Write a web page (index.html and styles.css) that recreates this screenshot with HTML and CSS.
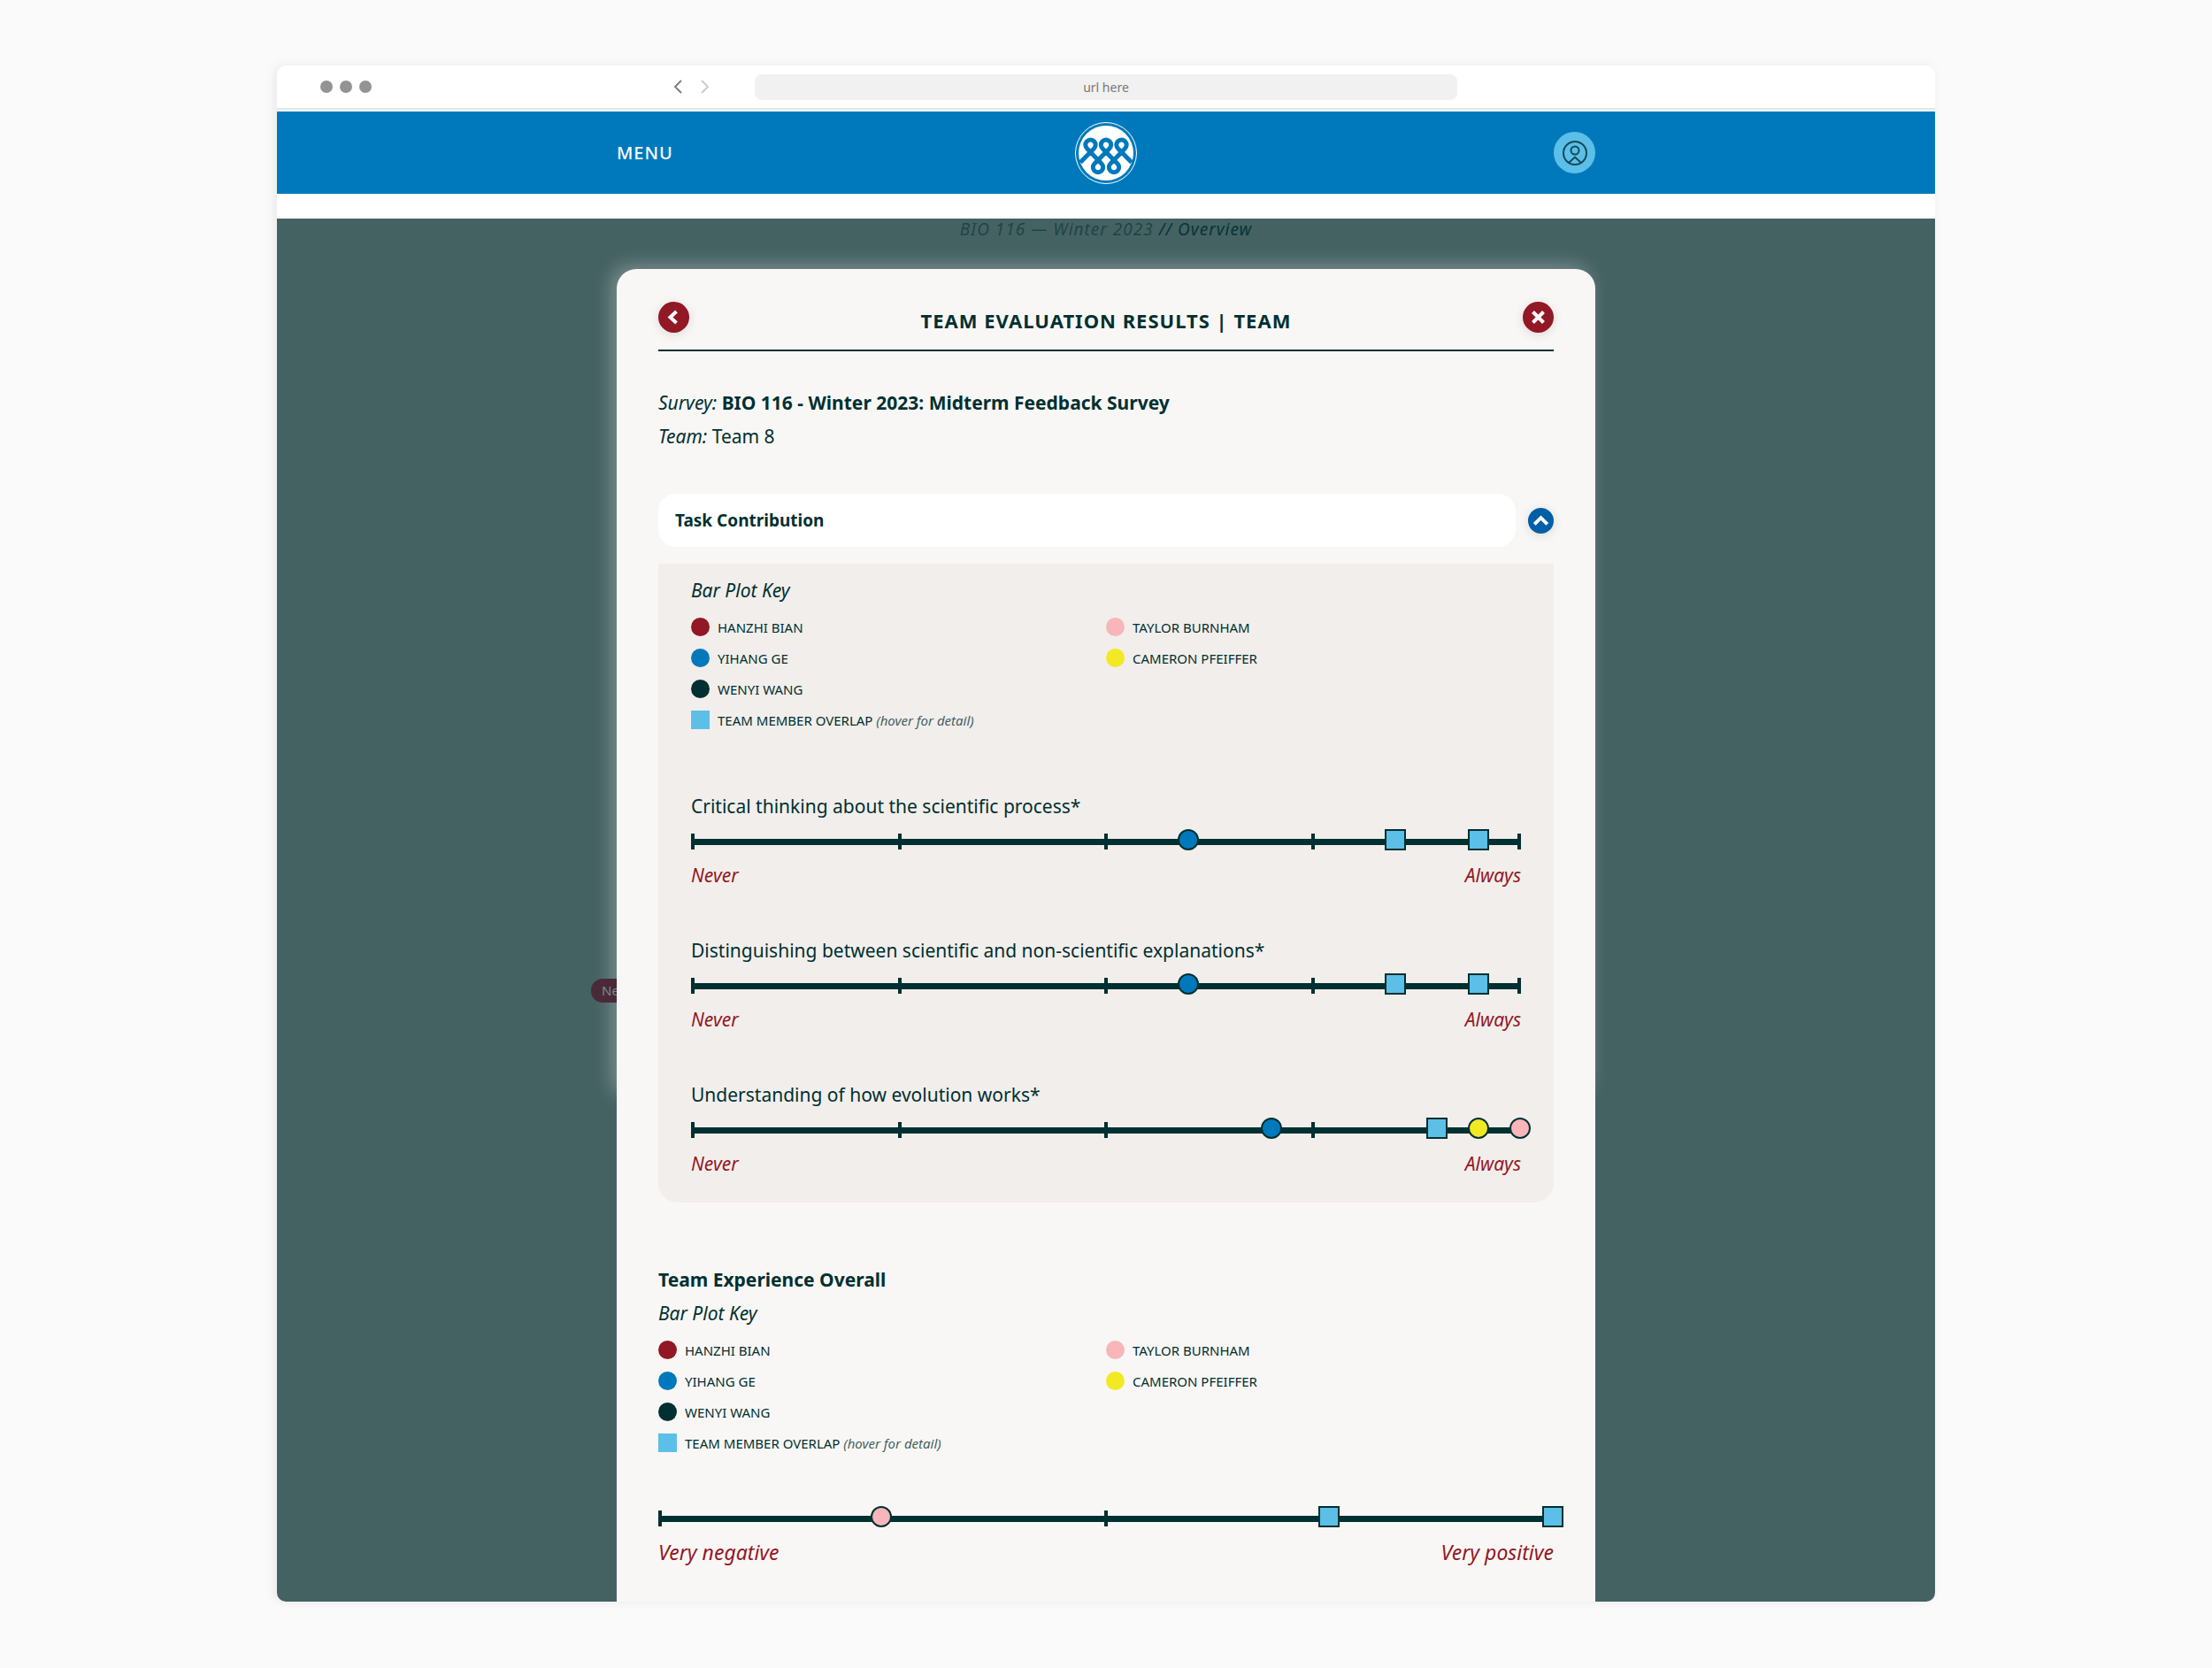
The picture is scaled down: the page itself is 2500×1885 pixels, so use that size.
FILE: index.html
```html
<!DOCTYPE html>
<html lang="en">
<head>
<meta charset="utf-8">
<meta name="viewport" content="width=device-width, initial-scale=1">
<title>Team Evaluation Results</title>
<link rel="stylesheet" href="styles.css">
</head>
<body>
<div class="browser">
  <div class="chrome">
    <div class="chrome-left">
      <div class="dots"><span class="dot"></span><span class="dot"></span><span class="dot"></span></div>
      <div class="arrows">
        <button class="arrow" type="button" aria-label="Back"><svg width="12" height="18" viewBox="0 0 12 18"><path d="M10 2 3 9l7 7"/></svg></button>
        <button class="arrow arrow-off" type="button" aria-label="Forward"><svg width="12" height="18" viewBox="0 0 12 18"><path d="m2 2 7 7-7 7"/></svg></button>
      </div>
    </div>
    <input class="url" type="text" value="url here" aria-label="Address">
  </div>

  <header class="site-header">
    <div class="site-bar">
      <div class="bar-side"><button class="menu" type="button">MENU</button></div>
      <a class="logo" href="#" aria-label="Home">
        <svg width="72" height="72" viewBox="-36 -36 72 72">
          <circle r="34.500" fill="none" stroke="#fff"/>
          <circle r="31" fill="#fff"/>
          <path class="knot" d="M-29 10.500-13.700-5A5.700 5.700 0 1 0-21.300-5L-5 12A5.700 5.700 0 1 1-13 12L3.800-5A5.700 5.700 0 1 0-3.800-5L13 12A5.700 5.700 0 1 1 5 12L21.300-5A5.700 5.700 0 1 0 13.700-5L29 10.500"/>
        </svg>
      </a>
      <div class="bar-side bar-end">
        <button class="avatar" type="button" aria-label="Account">
          <svg width="30" height="30" viewBox="-15 -15 30 30"><circle r="13"/><circle cy="-3" r="4.500"/><path d="M-7 11 0 4.500 7 11"/></svg>
        </button>
      </div>
    </div>
  </header>

  <main class="stage">
    <p class="crumbs">BIO 116 — Winter 2023 <span class="crumb-now">// Overview</span></p>
    <div class="modal-wrap">
      <span class="badge">New</span>
      <section class="modal">
        <div class="modal-head">
          <button class="round" type="button" aria-label="Back"><svg width="35" height="35" viewBox="0 0 35 35"><path d="m20.500 11-7 6.500 7 6.500"/></svg></button>
          <h1 class="modal-title">TEAM EVALUATION RESULTS | TEAM</h1>
          <button class="round" type="button" aria-label="Close"><svg width="35" height="35" viewBox="0 0 35 35"><path d="m11.500 11.500 12 12m0-12-12 12"/></svg></button>
        </div>

        <p class="survey"><em>Survey:</em> <strong>BIO 116 - Winter 2023: Midterm Feedback Survey</strong></p>
        <p class="team"><em>Team:</em> Team 8</p>

        <div class="accordion">
          <h2 class="accordion-title">Task Contribution</h2>
          <button class="round round-small" type="button" aria-label="Collapse" aria-expanded="true"><svg width="29" height="29" viewBox="0 0 30 30"><path d="m7.500 19 7.500-7.500 7.500 7.500"/></svg></button>
        </div>

        <div class="panel">
          <h3 class="key-title">Bar Plot Key</h3>
          <div class="key">
            <ul class="key-list">
              <li><i class="mark red"></i>HANZHI BIAN</li>
              <li><i class="mark blue"></i>YIHANG GE</li>
              <li><i class="mark dark"></i>WENYI WANG</li>
              <li><i class="mark overlap"></i><span>TEAM MEMBER OVERLAP <em class="hint">(hover for detail)</em></span></li>
            </ul>
            <ul class="key-list">
              <li><i class="mark pink"></i>TAYLOR BURNHAM</li>
              <li><i class="mark yellow"></i>CAMERON PFEIFFER</li>
            </ul>
          </div>

          <div class="plot">
            <h4 class="plot-title">Critical thinking about the scientific process*</h4>
            <div class="scale">
              <i class="tick"></i><i class="tick"></i><i class="tick"></i><i class="tick"></i><i class="tick"></i>
              <i class="point blue" style="left:60%"></i>
              <i class="point overlap" style="left:85%"></i>
              <i class="point overlap" style="left:95%"></i>
            </div>
            <div class="ends"><span>Never</span><span>Always</span></div>
          </div>
          <div class="plot">
            <h4 class="plot-title">Distinguishing between scientific and non-scientific explanations*</h4>
            <div class="scale">
              <i class="tick"></i><i class="tick"></i><i class="tick"></i><i class="tick"></i><i class="tick"></i>
              <i class="point blue" style="left:60%"></i>
              <i class="point overlap" style="left:85%"></i>
              <i class="point overlap" style="left:95%"></i>
            </div>
            <div class="ends"><span>Never</span><span>Always</span></div>
          </div>
          <div class="plot">
            <h4 class="plot-title">Understanding of how evolution works*</h4>
            <div class="scale">
              <i class="tick"></i><i class="tick"></i><i class="tick"></i><i class="tick"></i><i class="tick"></i>
              <i class="point blue" style="left:70%"></i>
              <i class="point overlap" style="left:90%"></i>
              <i class="point yellow" style="left:95%"></i>
              <i class="point pink" style="left:100%"></i>
            </div>
            <div class="ends"><span>Never</span><span>Always</span></div>
          </div>
        </div>

        <h2 class="overall-title">Team Experience Overall</h2>
        <h3 class="key-title">Bar Plot Key</h3>
        <div class="key">
          <ul class="key-list">
            <li><i class="mark red"></i>HANZHI BIAN</li>
            <li><i class="mark blue"></i>YIHANG GE</li>
            <li><i class="mark dark"></i>WENYI WANG</li>
            <li><i class="mark overlap"></i><span>TEAM MEMBER OVERLAP <em class="hint">(hover for detail)</em></span></li>
          </ul>
          <ul class="key-list">
            <li><i class="mark pink"></i>TAYLOR BURNHAM</li>
            <li><i class="mark yellow"></i>CAMERON PFEIFFER</li>
          </ul>
        </div>
        <div class="overall-plot">
          <div class="scale">
            <i class="tick"></i><i class="tick"></i><i class="tick"></i>
            <i class="point pink" style="left:25%"></i>
            <i class="point overlap" style="left:75%"></i>
            <i class="point overlap" style="left:100%"></i>
          </div>
          <div class="ends ends-large"><span>Very negative</span><span>Very positive</span></div>
        </div>
      </section>
    </div>
  </main>
</div>
</body>
</html>
```
FILE: styles.css
```css
:root {
  --ink: #003031;
  --red: #921825;
  --blue: #0079bc;
  --sky: #5bbfe8;
  --pink: #f8b6ba;
  --yellow: #f1e924;
  --paper: #f9f7f5;
  --content: 1106px;
}

* { box-sizing: border-box; }

body {
  margin: 0;
  padding: 74px 24px;
  background: #fafafa;
  color: var(--ink);
  font-family: "Noto Sans", "Open Sans", sans-serif;
  font-size: 21px;
}

h1, h2, h3, h4, p, ul { margin: 0; padding: 0; }
button { padding: 0; border: 0; background: none; color: inherit; font: inherit; cursor: pointer; }
svg { display: block; fill: none; }

.browser {
  max-width: 1874px;
  margin: 0 auto;
  border-radius: 10px;
  overflow: hidden;
  background: #fff;
  box-shadow: -3px 0 12px rgba(0, 0, 0, .07);
}

/* Browser chrome */
.chrome {
  display: grid;
  grid-template-columns: 1fr minmax(0, 794px) 1fr;
  align-items: center;
  height: 50px;
  border-bottom: 2px solid #e4e5e5;
}
.chrome-left {
  display: flex;
  align-items: center;
  justify-content: space-between;
  padding: 0 50px 0 49px;
}
.dots { display: flex; gap: 8px; }
.dot { width: 14px; height: 14px; border-radius: 50%; background: #939393; }
.arrows { display: flex; gap: 19px; }
.arrow svg { stroke: #808080; stroke-width: 2; }
.arrow-off svg { stroke: #ccc; }
.url {
  min-width: 0;
  height: 29px;
  border: 0;
  border-radius: 8px;
  background: #f1f1f1;
  color: #777;
  font: 14px "Noto Sans", sans-serif;
  text-align: center;
}

/* Site header */
.site-header {
  margin-top: 2px;
  padding: 0 24px;
  background: var(--blue);
  color: #fff;
}
.site-bar {
  display: flex;
  align-items: center;
  max-width: var(--content);
  height: 93px;
  margin: 0 auto;
}
.bar-side { display: flex; flex: 1; }
.bar-end { justify-content: flex-end; }
.menu { font-size: 20px; font-weight: 500; line-height: 28px; letter-spacing: 1px; }
.knot { stroke: var(--blue); stroke-width: 5; }
.avatar {
  display: grid;
  place-items: center;
  width: 47px;
  height: 47px;
  border-radius: 50%;
  background: var(--sky);
}
.avatar svg { stroke: #124a59; stroke-width: 2; }

/* Dimmed page behind the dialog */
.stage {
  margin-top: 28px;
  padding: 0 24px;
  background: #456263;
}
.crumbs {
  height: 57px;
  color: #1f4546;
  font-size: 19px;
  font-style: italic;
  line-height: 24px;
  letter-spacing: 1px;
  text-align: center;
}
.crumb-now { color: #063536; }
.modal-wrap {
  position: relative;
  max-width: var(--content);
  margin: 0 auto;
}
.modal-wrap::before {
  content: "";
  position: absolute;
  inset: 0 0 auto;
  height: 940px;
  border-radius: 22px;
  box-shadow: -6px -4px 20px rgba(249, 247, 245, .3);
}
.badge {
  position: absolute;
  top: 802px;
  left: -29px;
  padding: 0 12px;
  border-radius: 13px;
  background: #4b2a37;
  color: #768a90;
  font-size: 15px;
  line-height: 27px;
}

/* Dialog */
.modal {
  position: relative;
  padding: 37px 47px;
  border-radius: 22px 22px 0 0;
  background: var(--paper);
}
.modal-head {
  display: flex;
  justify-content: space-between;
  height: 56px;
  border-bottom: 2px solid var(--ink);
}
.modal-title {
  font-size: 22px;
  line-height: 42px;
  letter-spacing: 1px;
}
.round {
  width: 35px;
  height: 35px;
  border-radius: 50%;
  background: var(--red);
  box-shadow: 0 2px 12px rgba(0, 0, 0, .12);
}
.round svg { stroke: #fff; stroke-width: 4; }
.round-small { width: 29px; height: 29px; background: #005fa6; }
.survey { margin-top: 39px; line-height: 38px; }
.team { line-height: 38px; }

.accordion { display: flex; align-items: center; gap: 14px; margin-top: 46px; }
.accordion-title {
  flex: 1;
  padding: 0 19px;
  border-radius: 20px;
  background: #fff;
  font-size: 19px;
  line-height: 60px;
}

.panel {
  margin-top: 19px;
  padding: 11px 37px 18px;
  border-radius: 0 0 22px 22px;
  background: #f2eeeb;
}
.key-title {
  font-size: 21px;
  font-style: italic;
  font-weight: 400;
  line-height: 38px;
}
.key {
  display: grid;
  grid-template-columns: 1fr 1fr;
  margin-top: 5px;
  font-size: 15px;
}
.key-list { list-style: none; }
.key-list li { display: flex; align-items: center; gap: 9px; height: 35px; }
.hint { color: #41605f; }
.mark { width: 21px; height: 21px; border-radius: 50%; }
.red { background: var(--red); }
.blue { background: var(--blue); }
.dark { background: var(--ink); }
.pink { background: var(--pink); }
.yellow { background: var(--yellow); }
.overlap { border-radius: 0; background: var(--sky); }

.plot { height: 163px; }
.key + .plot { margin-top: 60px; }
.plot:last-child { height: 124px; }
.plot-title { font-size: 21px; font-weight: 400; line-height: 40px; }
.scale {
  position: relative;
  display: flex;
  align-items: center;
  justify-content: space-between;
  height: 18px;
  margin-top: 11px;
  background: linear-gradient(var(--ink), var(--ink)) center / 100% 7px no-repeat;
}
.tick { width: 4px; height: 18px; background: var(--ink); }
.point {
  position: absolute;
  top: -5px;
  width: 24px;
  height: 24px;
  margin-left: -13px;
  border: 2px solid var(--ink);
  border-radius: 50%;
}
.point.overlap { border-radius: 0; }
.ends {
  display: flex;
  justify-content: space-between;
  margin-top: 10px;
  color: var(--red);
  font-size: 21px;
  font-style: italic;
  line-height: 38px;
}
.ends-large { font-size: 23px; }

.overall-title { margin-top: 68px; font-size: 21px; line-height: 38px; }
.overall-plot { margin-top: 59px; }
```
